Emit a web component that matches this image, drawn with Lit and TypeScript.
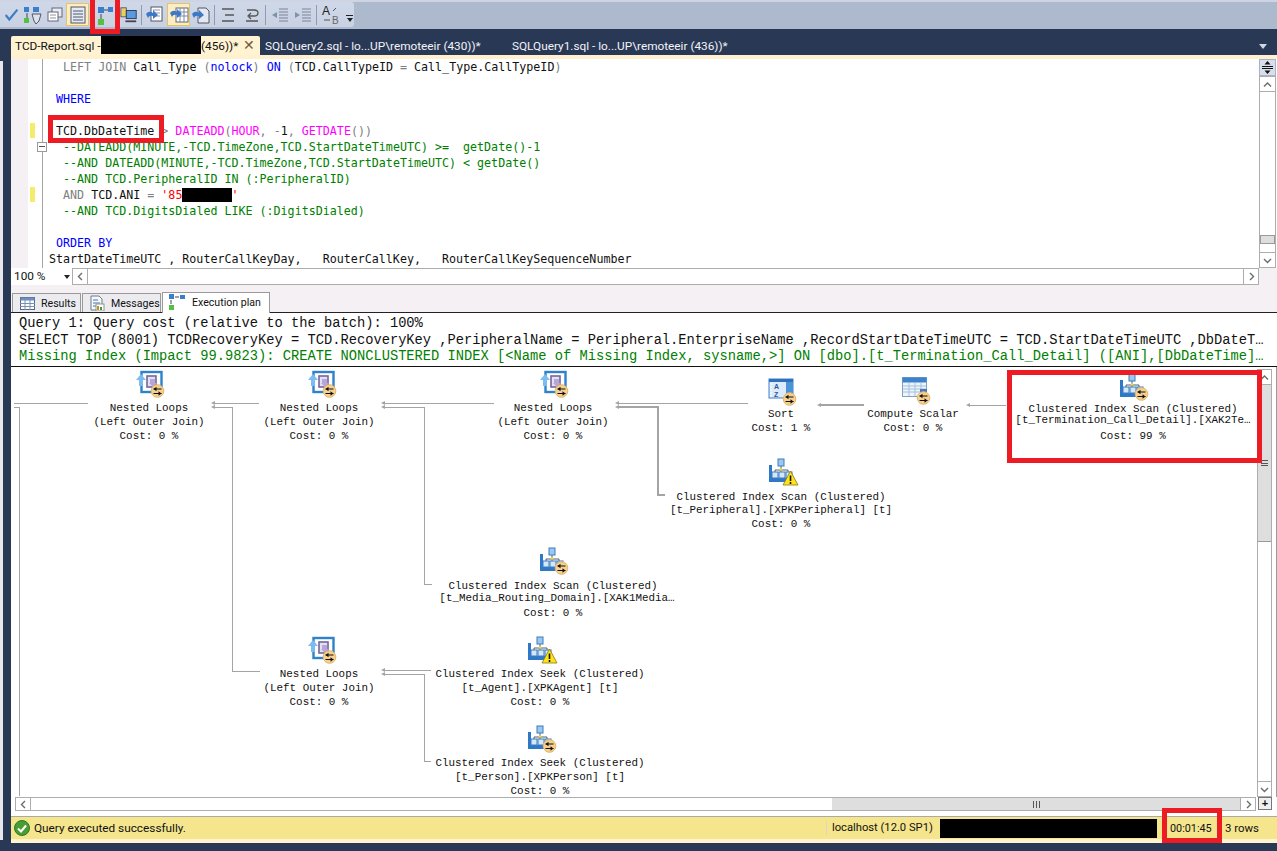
import { LitElement, css, html, svg } from 'lit';
import { customElement } from 'lit/decorators.js';

// badge + warning overlays shared by the plan icons
const badge = svg`<circle cx="21.5" cy="21" r="6.3" fill="#f6d08e" stroke="#e3b66c"/>
  <path d="M17.5 19h8M17.5 23.5h8" stroke="#111" stroke-width="1.1"/>
  <path d="M20.5 16.8l-3 2.2 3 2.2zM22.5 21.3l3 2.2-3 2.2z" fill="#111"/>`;
const warn = svg`<path d="M21.5 13 L29 27 H14 Z" fill="#ffe21a" stroke="#8a7a10" stroke-width=".8"/>
  <path d="M21.5 17.5v5.5M21.5 24v2" stroke="#111" stroke-width="1.6"/>`;

const nestedIcon = () => html`<svg width="30" height="30" viewBox="0 0 30 30">
  <rect x="5.5" y="2" width="20" height="20" fill="#fff" stroke="#2e82cc" stroke-width="2.4"/>
  <path d="M0 10 L5 4 L10 10 H7 V16 H3 V10Z" fill="#7cbcf0"/>
  <rect x="11" y="6" width="9" height="11" fill="#e4dff2" stroke="#75659f" stroke-width="1.6"/>
  <path d="M14 9h5v4h2l-4 4-4-4h1z" fill="#b5a8d8"/>
  ${badge}
</svg>`;

const treeIcon = (over: 'badge' | 'warn') => html`<svg width="30" height="30" viewBox="0 0 30 30">
  <rect x="0" y="20" width="25" height="4" fill="#2f78c8"/>
  <rect x="0" y="7" width="3" height="15" fill="#2f78c8"/>
  <path d="M12 8v4M6 15v-3h13v3M12 12v3" stroke="#506070" fill="none"/>
  <rect x="9" y="1" width="6" height="7" fill="#9cc8f0" stroke="#3c7cc0"/>
  <rect x="3" y="14" width="6" height="6" fill="#d4e6f8" stroke="#3c7cc0"/>
  <rect x="10" y="14" width="6" height="6" fill="#d4e6f8" stroke="#3c7cc0"/>
  <rect x="17" y="14" width="6" height="6" fill="#d4e6f8" stroke="#3c7cc0"/>
  <circle cx="12" cy="11.5" r="1.2" fill="#f4e020"/>
  ${over === 'badge' ? badge : warn}
</svg>`;

const sortIcon = () => html`<svg width="30" height="30" viewBox="0 0 30 30">
  <rect x="1" y="1" width="24" height="19" fill="#dcebfa" stroke="#3d82cc"/>
  <rect x="1" y="1" width="24" height="3" fill="#2f6fbc"/>
  <rect x="18" y="4" width="7" height="16" fill="#4c92d8"/>
  <path d="M3 5v14" stroke="#fff" stroke-dasharray="2 1"/>
  <text x="6" y="11" font-size="7" font-family="Liberation Sans" font-weight="700" fill="#2c5a96">A</text>
  <text x="6" y="19" font-size="7" font-family="Liberation Sans" font-weight="700" fill="#2c5a96">Z</text>
  ${badge}
</svg>`;

const scalarIcon = () => html`<svg width="30" height="30" viewBox="0 0 30 30">
  <rect x=".5" y=".5" width="24" height="19" fill="#eef4fb" stroke="#7ea3c8"/>
  <rect x=".5" y=".5" width="24" height="5" fill="#3d82cc"/>
  <path d="M1 9h23M1 12h23M1 15h23M7 6v13M13 6v13M19 6v13" stroke="#a5c0dc"/>
  <rect x="18" y="12" width="7" height="7" fill="#4a78b8"/>
  ${badge}
</svg>`;

const planIcons = { nested: nestedIcon, scan: () => treeIcon('badge'), scanWarn: () => treeIcon('warn'), sort: sortIcon, scalar: scalarIcon };

// a label line is [text, y] or [text, y, x shift from the node's centre]
type Line = [string, number, number?];
type PlanNode = { icon: keyof typeof planIcons; ix: number; iy: number; cx: number; lines: Line[] };

const SCAN = 'Clustered Index Scan (Clustered)';
const SEEK = 'Clustered Index Seek (Clustered)';
const NL = (y: number): Line[] => [['Nested Loops', y], ['(Left Outer Join)', y + 14], ['Cost: 0 %', y + 28]];

const nodes: PlanNode[] = [
  { icon: 'nested', ix: 137, iy: 371, cx: 150, lines: NL(407) },
  { icon: 'nested', ix: 309, iy: 371, cx: 320, lines: NL(407) },
  { icon: 'nested', ix: 541, iy: 371, cx: 554, lines: NL(407) },
  { icon: 'sort', ix: 769, iy: 379, cx: 782, lines: [['Sort', 413], ['Cost: 1 %', 427]] },
  { icon: 'scalar', ix: 903, iy: 378, cx: 914, lines: [['Compute Scalar', 413], ['Cost: 0 %', 427]] },
  { icon: 'scan', ix: 1121, iy: 374, cx: 1134, lines: [[SCAN, 408], ['[t_Termination_Call_Detail].[XAK2Te…', 419], ['Cost: 99 %', 435]] },
  { icon: 'scanWarn', ix: 770, iy: 459, cx: 782, lines: [[SCAN, 496], ['[t_Peripheral].[XPKPeripheral] [t]', 509], ['Cost: 0 %', 523]] },
  { icon: 'scan', ix: 541, iy: 548, cx: 554, lines: [[SCAN, 585], ['[t_Media_Routing_Domain].[XAK1Media…', 597, 4], ['Cost: 0 %', 612]] },
  { icon: 'nested', ix: 309, iy: 637, cx: 320, lines: NL(673) },
  { icon: 'scanWarn', ix: 529, iy: 637, cx: 541, lines: [[SEEK, 673], ['[t_Agent].[XPKAgent] [t]', 687], ['Cost: 0 %', 701]] },
  { icon: 'scan', ix: 529, iy: 726, cx: 541, lines: [[SEEK, 762], ['[t_Person].[XPKPerson] [t]', 776], ['Cost: 0 %', 790]] },
];

// connector polylines in page coordinates: [width, points]
const wires: [number, string][] = [
  [1, '15,404 89,404'],
  [1, '15,408 20,408 20,797'],
  [1, '214,404 260,404'],
  [1, '214,408 233,408 233,672 261,672'],
  [1, '384,404 495,404'],
  [1, '384,408 425,408 425,585 433,585'],
  [1, '618,404 749,404'],
  [2, '618,408 659,408 659,496 666,496'],
  [2, '820,406 865,406'],
  [1, '969,406 1007,406'],
  [1, '384,671 432,671'],
  [1, '384,675 425,675 425,762 432,762'],
];
const tips: [number, number][] = [[212, 404], [212, 408], [382, 404], [382, 408], [616, 404], [616, 408], [818, 406], [967, 406], [382, 671], [382, 675]];

// toolbar glyphs
const ico = (body: unknown) => html`<svg width="20" height="20" viewBox="0 0 20 20">${body}</svg>`;
const planGlyph = svg`<rect x="3" y="2" width="6" height="6" fill="#3a7ed0"/><rect x="13" y="2" width="5" height="5" fill="#3a7ed0"/><path d="M9 5h4M6 9v5" stroke="#445" /><rect x="3" y="14" width="6" height="6" fill="#58c040"/>`;
const docGlyph = svg`<rect x="6" y="2" width="11" height="14" fill="#fff" stroke="#556"/><path d="M8 5h7M8 8h7M8 11h7" stroke="#8a94a8"/><path d="M1 9 q3-4 7-1 v-3 l5 5-5 4v-3 q-4-1-5 2z" fill="#3c78c8"/>`;
const gridDoc = svg`<rect x="7" y="3" width="12" height="14" fill="#fff" stroke="#667"/><path d="M7 7h12M7 11h12M11 3v14M15 3v14" stroke="#7c8aa4"/><path d="M1 8 q3-4 7-1 v-3 l5 5-5 4v-3 q-4-1-5 2z" fill="#3c78c8"/>`;
const solidDoc = svg`<path d="M7 3h8l3 3v12H7z" fill="#e4e8f0" stroke="#556"/><path d="M1 9 q3-4 7-1 v-3 l5 5-5 4v-3 q-4-1-5 2z" fill="#3c78c8"/>`;

type Tool = { w: number; on?: boolean; sep?: boolean; g?: unknown };
const tools: Tool[] = [
  { w: 3 },
  { w: 18, g: svg`<path d="M3 10 l4 5 L16 4" fill="none" stroke="#3f7cc4" stroke-width="2.4"/>` },
  { w: 23, g: svg`<rect x="1" y="2" width="5" height="5" fill="#3a7ed0"/><rect x="10" y="2" width="6" height="5" fill="#3a7ed0"/><path d="M4 8v5" stroke="#445"/><rect x="1" y="13" width="5" height="5" fill="#58c040"/><path d="M9 9h9l-2 7-3 3-2-3z" fill="#dde3ec" stroke="#556"/>` },
  { w: 22, g: svg`<rect x="7" y="3" width="10" height="9" fill="#e8ecf4" stroke="#667"/><rect x="3" y="7" width="10" height="9" fill="#fff" stroke="#667"/><path d="M5 10h6M5 13h6" stroke="#8a94a8"/>` },
  { w: 23, on: true, g: svg`<rect x="3" y="2" width="14" height="16" fill="#e6eaf2" stroke="#556"/><path d="M5 6h10M5 9h10M5 12h10M5 15h10" stroke="#4c5a72"/>` },
  { w: 1 },
  { w: 30, g: planGlyph },
  { w: 18, g: svg`<rect x="1" y="2" width="6" height="10" fill="#e6d060" stroke="#556"/><rect x="7" y="5" width="11" height="9" fill="#5a9ae0" stroke="#334"/><path d="M6 17h12" stroke="#445" stroke-width="2"/>` },
  { w: 3 },
  { sep: true, w: 1 },
  { w: 1 },
  { w: 23, g: docGlyph },
  { w: 1 },
  { w: 23, on: true, g: gridDoc },
  { w: 21, g: solidDoc },
  { w: 3 },
  { sep: true, w: 1 },
  { w: 1 },
  { w: 24, g: svg`<path d="M4 4h12M7 10h9M4 16h12" stroke="#555" stroke-width="1.4"/>` },
  { w: 24, g: svg`<path d="M5 5h7q4 0 4 3t-4 3H7M9 8l-3 3 3 3M4 16h12" fill="none" stroke="#555" stroke-width="1.3"/>` },
  { w: 1 },
  { sep: true, w: 1 },
  { w: 2 },
  { w: 23, g: svg`<path d="M9 4h9M9 7h9M9 10h9M9 13h9M9 16h9" stroke="#7a8494"/><path d="M7 7l-5 3 5 3z" fill="#7f93aa"/>` },
  { w: 23, g: svg`<path d="M9 4h9M9 7h9M9 10h9M9 13h9M9 16h9" stroke="#7a8494"/><path d="M2 7l5 3-5 3z" fill="#7f93aa"/>` },
  { w: 2 },
  { sep: true, w: 1 },
  { w: 2 },
  { w: 22, g: svg`<text x="2" y="10" font-size="12" font-family="Liberation Sans" fill="#222">A</text><text x="12" y="19" font-size="10" font-family="Liberation Sans" fill="#666">B</text><path d="M13 6l3-3M4 15h6" stroke="#555"/>` },
];

const G = (t: string) => html`<span class="gr">${t}</span>`;
const B = (t: string) => html`<span class="bl">${t}</span>`;
const C = (t: string) => html`<span class="cm">${t}</span>`;
const P = (t: string) => html`<span class="pk">${t}</span>`;

const code = [
  html`  ${G('LEFT JOIN')} Call_Type ${G('(')}${B('nolock')}${G(')')} ${B('ON')} ${G('(')}TCD.CallTypeID ${G('=')} Call_Type.CallTypeID${G(')')}`,
  html``,
  html` ${B('WHERE')}`,
  html``,
  html` TCD.DbDateTime ${G('>')} ${P('DATEADD')}${G('(')}${P('HOUR')}${G(',')} ${G('-')}1${G(',')} ${P('GETDATE')}${G('())')}`,
  html`  ${C('--DATEADD(MINUTE,-TCD.TimeZone,TCD.StartDateTimeUTC) >=  getDate()-1')}`,
  html`  ${C('--AND DATEADD(MINUTE,-TCD.TimeZone,TCD.StartDateTimeUTC) < getDate()')}`,
  html`  ${C('--AND TCD.PeripheralID IN (:PeripheralID)')}`,
  html`  ${G('AND')} TCD.ANI ${G('=')} <span class="st">'85<span class="redact">       </span>'</span>`,
  html`  ${C('--AND TCD.DigitsDialed LIKE (:DigitsDialed)')}`,
  html``,
  html` ${B('ORDER BY')}`,
  html`StartDateTimeUTC , RouterCallKeyDay,   RouterCallKey,   RouterCallKeySequenceNumber`,
];

const chevron = (d: string) => html`<svg width="9" height="9" viewBox="0 0 9 9"><path d="${d}" fill="none" stroke="#6b6b6b" stroke-width="1.4"/></svg>`;
const UP = 'M1 6.5 L4.5 3 L8 6.5';
const DOWN = 'M1 3 L4.5 6.5 L8 3';
const LEFT = 'M6 1 L2.5 4.5 L6 8';
const RIGHT = 'M3 1 L6.5 4.5 L3 8';

@customElement('app-root')
export class AppRoot extends LitElement {
  static styles = css`
    :host {
      display: block;
      position: relative;
      width: 1277px;
      height: 851px;
      overflow: hidden;
      background: #293955;
      font-family: Roboto, 'Noto Sans', sans-serif;
      font-size: 11.8px;
      color: #111;
    }
    .app { display: flex; flex-direction: column; height: 851px; }

    .topbar { height: 29px; background: #adb9cd; border-top: 2px solid #ced4e4; box-sizing: border-box; flex: none; }
    .toolbar { display: flex; align-items: center; width: 354px; height: 25px; background: linear-gradient(#cfd8e8, #c8d2e3); border-radius: 0 3px 3px 0; }
    .tool { height: 23px; display: flex; align-items: center; justify-content: center; flex: none; box-sizing: border-box; }
    .tool.on { background: #fdeec2; border: 1px solid #e5c365; }
    .tool.sep { height: 20px; background: #8e9bb0; }
    .more { margin-left: 4px; width: 9px; display: flex; flex-direction: column; align-items: center; gap: 2px; padding-top: 8px; }
    .more i { display: block; width: 7px; height: 1px; background: #222; }
    .more b { width: 0; height: 0; border: 3.5px solid transparent; border-top: 4px solid #222; border-bottom: 0; }

    .tabs { height: 26px; flex: none; display: flex; align-items: flex-end; padding-left: 11px; box-sizing: border-box; position: relative; }
    .tab { height: 19px; line-height: 20px; white-space: pre; color: #f2f4f8; display: flex; flex: none; }
    .tab.active { width: 249px; background: #fff3d2; color: #111; padding: 0 5px 0 4px; box-sizing: border-box; border-radius: 2px 2px 0 0; }
    .tab .name { width: 86px; }
    .tab .block { display: block; width: 100px; height: 18px; background: #000; }
    .tab .x { margin-left: auto; font-size: 14px; color: #6b5b3c; line-height: 19px; }
    .tab.second { margin-left: 5px; width: 247px; }
    .drop { position: absolute; right: 10px; top: 15px; width: 0; height: 0; border: 4px solid transparent; border-top: 5px solid #cfd6e4; border-bottom: 0; }

    .body { flex: 1; display: flex; min-height: 0; }
    .rail { width: 3px; background: #e8e8ec; flex: none; margin-top: 6px; margin-bottom: 11px; }
    .gap { width: 8px; flex: none; }
    .work { flex: 1; display: flex; flex-direction: column; min-width: 0; }

    .band { height: 4px; background: #fff1d0; flex: none; }
    .editor { height: 209px; display: flex; background: #fff; flex: none; }
    .gutter { width: 17px; background: #f4f0f4; flex: none; }
    .margin { width: 21px; position: relative; flex: none; }
    .mark { position: absolute; left: 2px; width: 5px; height: 15px; background: #f5ec6b; }
    .fold { position: absolute; left: 9px; top: 83px; width: 8px; height: 8px; border: 1px solid #9a9a9a; background: #fff; }
    .fold::after { content: ''; position: absolute; left: 1px; right: 1px; top: 3px; height: 1px; background: #555; }
    .vline { position: absolute; left: 14px; top: 0; bottom: 0; width: 1px; background: #a5a5a5; }
    .code { flex: 1; font: 11.67px/16px 'DejaVu Sans Mono', monospace; white-space: pre; overflow: hidden; }
    .code div { height: 16px; }
    .gr { color: #808080; }
    .bl { color: #0000ff; }
    .cm { color: #008000; }
    .pk { color: #ff00ff; }
    .st { color: #ff0000; }
    .redact { background: #000; }
    .vs { width: 18px; flex: none; display: flex; flex-direction: column; background: #fff; padding-right: 1px; box-sizing: border-box; }
    .split { width: 17px; height: 17px; background: #d8dfec; border: 1px solid #a9b3c4; box-sizing: border-box; display: flex; align-items: center; justify-content: center; }
    .arrow { width: 17px; flex: none; height: 16px; box-sizing: border-box; border: 1px solid #adadad; background: #fff; display: flex; align-items: center; justify-content: center; }
    .track { flex: 1; width: 17px; background: #fff; border-left: 1px solid #adadad; border-right: 1px solid #adadad; box-sizing: border-box; display: flex; flex-direction: column; }
    .spacer { height: 143px; flex: none; }
    .mini { height: 9px; background: #dedede; border: 1px solid #9a9a9a; box-sizing: border-box; flex: none; }
    .zoomrow { height: 17px; flex: none; display: flex; background: #f4f0f4; }
    .zoombox { width: 61px; background: #fff; line-height: 17px; padding-left: 3px; box-sizing: border-box; position: relative; }
    .zoombox::after { content: ''; position: absolute; right: 2px; top: 7px; border: 3.5px solid transparent; border-top: 4px solid #222; border-bottom: 0; }
    .hs { flex: 1; display: flex; align-items: stretch; min-width: 0; }
    .hs .arrow { height: auto; width: 16px; }
    .hs .flat { flex: 1; background: #fff; border-top: 1px solid #adadad; border-bottom: 1px solid #adadad; }
    .hs .tail { width: 18px; flex: none; }

    .rtabs { height: 27px; flex: none; background: #f4f0f4; display: flex; align-items: flex-end; padding-left: 1px; border-bottom: 1px solid #222; font-size: 10.6px; }
    .rtab { height: 19px; background: #ececf0; border: 1px solid #9a9a9a; border-bottom: 0; display: flex; align-items: center; gap: 6px; box-sizing: border-box; flex: none; margin-right: 1px; padding-left: 7px; white-space: nowrap; }
    .rtab svg { flex: none; }
    .rtab.sel { height: 21px; background: #fff; padding-left: 6px; margin: 0 0 -1px 0; position: relative; gap: 7px; padding-bottom: 2px; }

    .header { height: 54px; flex: none; background: #fff; font: 13.74px/16.5px 'Liberation Mono', monospace; padding: 3px 0 0 8px; box-sizing: border-box; border-bottom: 1px solid #111; color: #111; }
    .header div { overflow: hidden; width: 1251px; white-space: pre; }
    .header .miss { color: #008000; }

    .plan { flex: 1; display: flex; background: #fff; min-height: 0; }
    .canvas { flex: 1; position: relative; overflow: hidden; min-width: 0; }
    .wires { position: absolute; left: -12px; top: -368px; width: 1277px; height: 851px; pointer-events: none; }
    .icon { position: absolute; }
    .label { position: absolute; width: 300px; margin-left: -150px; text-align: center; font: 10.9px/14px 'Liberation Mono', monospace; white-space: pre; color: #111; }
    .pscroll { width: 20px; flex: none; display: flex; flex-direction: column; padding-top: 2px; box-sizing: border-box; border-right: 1px solid #9a9aa4; }
    .pscroll .arrow, .pscroll .track { width: 15px; }
    .grip { margin: auto; width: 7px; height: 6px; border-top: 1px solid #555; border-bottom: 1px solid #555; box-sizing: border-box; position: relative; }
    .grip::after { content: ''; position: absolute; left: 0; right: 0; top: 1.5px; height: 1px; background: #555; }
    .vthumb { height: 156px; background: #dedede; display: flex; border-bottom: 1px solid #9a9a9a; }
    .hthumb { width: 408px; background: #dedede; border-top: 1px solid #adadad; border-bottom: 1px solid #adadad; display: flex; box-sizing: border-box; }
    .hgrip { margin: auto; height: 7px; width: 7px; border-left: 1px solid #555; border-right: 1px solid #555; box-sizing: border-box; position: relative; }
    .hgrip::after { content: ''; position: absolute; top: 0; bottom: 0; left: 2px; width: 1px; background: #555; }

    .hbar { height: 14px; flex: none; background: #fff; display: flex; padding: 0 5px 0 4px; }
    .hbar .flat { flex: 1; background: #fff; border-top: 1px solid #adadad; border-bottom: 1px solid #adadad; }
    .hbar .arrow { height: auto; width: 16px; }
    .plus { width: 14px; margin-left: 2px; height: 13px; border: 1px solid #777; background: #f0f0f0; box-sizing: border-box; font: 700 11px/11px 'Liberation Sans', sans-serif; text-align: center; }
    .divider { height: 5px; background: #fff; border-bottom: 1px solid #a9a9a9; flex: none; }

    .status { height: 22px; flex: none; background: #f5e58c; display: flex; align-items: center; position: relative; white-space: nowrap; }
    .status svg { margin: 0 4px 0 3px; flex: none; }
    .status .msg { flex: 1; }
    .status .conn { width: 114px; box-sizing: border-box; padding-left: 5px; border-left: 1px solid #d8d8c8; line-height: 14px; font-size: 11.2px; }
    .status .black { width: 217px; height: 19px; background: #000; margin-right: 13px; }
    .status .time { width: 55px; font-size: 10.8px; }
    .status .rows { width: 52px; font-size: 11.4px; }
    .pale { height: 4px; background: #fff3d0; flex: none; }
    .foot { height: 8px; flex: none; }

    .callout { position: absolute; border: 5px solid #ed1c24; box-sizing: border-box; pointer-events: none; }
    .c1 { left: 90px; top: 0; width: 30px; height: 34px; border-top: 0; }
    .c2 { left: 48px; top: 115px; width: 116px; height: 28px; }
    .c3 { left: 1007px; top: 370px; width: 255px; height: 93px; }
    .c4 { left: 1162px; top: 808px; width: 60px; height: 35px; }
  `;

  render() {
    return html`<div class="app">
      <div class="topbar">
        <div class="toolbar">
          ${tools.map(t => html`<div class="tool ${t.on ? 'on' : ''} ${t.sep ? 'sep' : ''}" style="width:${t.w}px">
            ${t.g ? ico(t.g) : ''}
          </div>`)}
          <div class="more"><i></i><b></b></div>
        </div>
      </div>

      <div class="tabs">
        <div class="tab active"><span class="name">TCD-Report.sql - </span><span class="block"></span>(456))*<span class="x">✕</span></div>
        <div class="tab second">SQLQuery2.sql - lo...UP\\remoteeir (430))*</div>
        <div class="tab">SQLQuery1.sql - lo...UP\\remoteeir (436))*</div>
        <div class="drop"></div>
      </div>

      <div class="body">
        <div class="rail"></div><div class="gap"></div>
        <div class="work">
          <div class="band"></div>
          <div class="editor">
            <div class="gutter"></div>
            <div class="margin">
              <div class="vline"></div>
              <div class="mark" style="top:64px"></div>
              <div class="mark" style="top:128px"></div>
              <div class="fold"></div>
            </div>
            <div class="code">${code.map(l => html`<div>${l}</div>`)}</div>
            <div class="vs">
              <div class="split"><svg width="11" height="13" viewBox="0 0 11 13"><path d="M0 5.5h11M0 7.5h11" stroke="#111"/><path d="M5.5 0l3 3.5h-6zM5.5 13l3-3.5h-6z" fill="#111"/></svg></div>
              <div class="arrow">${chevron(UP)}</div>
              <div class="track">
                <div class="spacer"></div>
                <div class="mini"></div>
              </div>
              <div class="arrow">${chevron(DOWN)}</div>
            </div>
          </div>
          <div class="zoomrow">
            <div class="zoombox">100 %</div>
            <div class="hs">
              <div class="arrow">${chevron(LEFT)}</div>
              <div class="flat"></div>
              <div class="arrow">${chevron(RIGHT)}</div>
              <div class="tail"></div>
            </div>
          </div>

          <div class="rtabs">
            <div class="rtab" style="width:69px">
              <svg width="15" height="13" viewBox="0 0 15 13"><rect x=".5" y=".5" width="14" height="12" fill="#fff" stroke="#556a8a"/><rect x=".5" y=".5" width="14" height="3" fill="#6c8ec0"/><path d="M5 3v10M10 3v10M0 6.5h15M0 9.5h15" stroke="#7a90b0"/></svg>
              Results
            </div>
            <div class="rtab" style="width:79px">
              <svg width="15" height="16" viewBox="0 0 15 16"><path d="M1 1h8l3 3v11H1z" fill="#f8f8f8" stroke="#6f7a8a"/><path d="M3 5h5M3 8h7M3 11h3" stroke="#3f78b8"/><rect x="6" y="9" width="8" height="7" fill="#fff" stroke="#8a9a8a"/><rect x="7" y="11" width="2" height="4" fill="#d08a30"/><rect x="10" y="12" width="2" height="3" fill="#3f9a58"/></svg>
              Messages
            </div>
            <div class="rtab sel" style="width:108px">
              <svg width="16" height="16" viewBox="0 0 16 16"><rect x="0" y="0" width="5" height="5" fill="#3a7ed0"/><rect x="11" y="1" width="5" height="4" fill="#3a7ed0"/><path d="M6 3h4M2 6v4" stroke="#445"/><rect x="0" y="11" width="5" height="5" fill="#58c040"/></svg>
              Execution plan
            </div>
          </div>

          <div class="header">
            <div>Query 1: Query cost (relative to the batch): 100%</div>
            <div>SELECT TOP (8001) TCDRecoveryKey = TCD.RecoveryKey ,PeripheralName = Peripheral.EnterpriseName ,RecordStartDateTimeUTC = TCD.StartDateTimeUTC ,DbDateT…</div>
            <div class="miss">Missing Index (Impact 99.9823): CREATE NONCLUSTERED INDEX [&lt;Name of Missing Index, sysname,&gt;] ON [dbo].[t_Termination_Call_Detail] ([ANI],[DbDateTime]…</div>
          </div>

          <div class="plan">
            <div class="canvas">
              <svg class="wires" viewBox="0 0 1277 851">
                ${wires.map(([w, p]) => svg`<polyline points="${p}" fill="none" stroke="#a4a4a4" stroke-width="${w}" shape-rendering="crispEdges"/>`)}
                ${tips.map(([x, y]) => svg`<path d="M${x} ${y}l4-2v4z" fill="#a4a4a4"/>`)}
              </svg>
              ${nodes.map(n => html`
                <div class="icon" style="left:${n.ix - 12}px;top:${n.iy - 368}px">${planIcons[n.icon]()}</div>
                ${n.lines.map(([t, y, dx]) => html`<div class="label" style="left:${n.cx - 12 + (dx ?? 0)}px;top:${y - 368 - 5}px">${t}</div>`)}
              `)}
            </div>
            <div class="pscroll">
              <div class="arrow">${chevron(UP)}</div>
              <div class="track">
                <div class="vthumb"><div class="grip"></div></div>
              </div>
              <div class="arrow">${chevron(DOWN)}</div>
            </div>
          </div>
          <div class="hbar">
            <div class="arrow">${chevron(LEFT)}</div>
            <div class="flat"></div>
            <div class="hthumb"><div class="hgrip"></div></div>
            <div class="arrow">${chevron(RIGHT)}</div>
            <div class="plus">+</div>
          </div>
          <div class="divider"></div>

          <div class="status">
            <svg width="16" height="16" viewBox="0 0 16 16"><circle cx="8" cy="8" r="7.5" fill="#4a9c34" stroke="#2f7a24"/><path d="M4 8.5l3 3 5-6" fill="none" stroke="#fff" stroke-width="2"/></svg>
            <span class="msg">Query executed successfully.</span>
            <span class="conn">localhost (12.0 SP1)</span>
            <span class="black"></span>
            <span class="time">00:01:45</span>
            <span class="rows">3 rows</span>
          </div>
          <div class="pale"></div>
          <div class="foot"></div>
        </div>
      </div>
      <div class="callout c1"></div>
      <div class="callout c2"></div>
      <div class="callout c3"></div>
      <div class="callout c4"></div>
    </div>`;
  }
}
